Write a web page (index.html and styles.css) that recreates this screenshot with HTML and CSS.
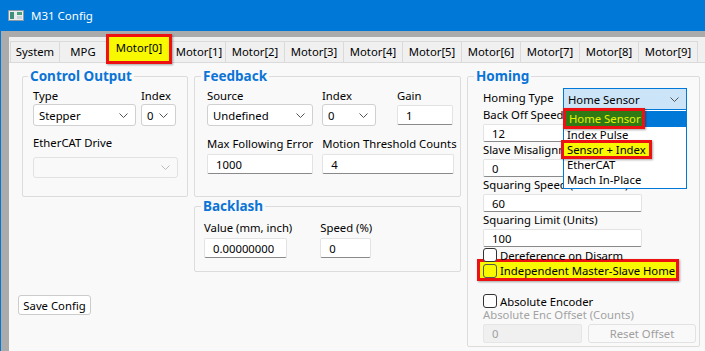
FILE: index.html
```html
<!DOCTYPE html>
<html lang="en">
<head>
  <meta charset="UTF-8" />
  <title>M31 Config</title>
  <link rel="stylesheet" href="styles.css">
</head>
<body>

  <div class="titlebar">
    <svg class="appIcon" width="16" height="11" viewBox="0 0 16 11">
      <rect x="0.5" y="0.5" width="15" height="10" fill="#e8ecef" stroke="#8b9aa6" />
      <rect x="2" y="2" width="4" height="7" fill="#3f8f7a" />
      <rect x="9" y="2" width="5" height="3" fill="#49a07f" />
      <rect x="9" y="6" width="5" height="3" fill="#c9d3da" />
    </svg>
    <span>M31 Config</span>
  </div>

  <div class="frame">
    <div class="tabs">
      <div class="tab tabSystem">System</div>
      <div class="tab tabMpg">MPG</div>
      <div class="tab tabActive">Motor[0]</div>
      <div class="tab tabFirst">Motor[1]</div>
      <div class="tab">Motor[2]</div>
      <div class="tab">Motor[3]</div>
      <div class="tab">Motor[4]</div>
      <div class="tab">Motor[5]</div>
      <div class="tab">Motor[6]</div>
      <div class="tab">Motor[7]</div>
      <div class="tab">Motor[8]</div>
      <div class="tab">Motor[9]</div>
    </div>

    <div class="panel">

      <div class="colLeft">
        <div class="group grpControl">
          <div class="groupTitle">Control Output</div>
          <div class="row rowTop">
            <div class="field">
              <label>Type</label>
              <div class="combo w103"><span>Stepper</span><svg class="chev" width="9" height="5" viewBox="0 0 9 5"><path d="M0.5 0.5 L4.5 4.5 L8.5 0.5" fill="none" stroke="#555" /></svg></div>
            </div>
            <div class="field">
              <label>Index</label>
              <div class="combo w35"><span>0</span><svg class="chev" width="9" height="5" viewBox="0 0 9 5"><path d="M0.5 0.5 L4.5 4.5 L8.5 0.5" fill="none" stroke="#555" /></svg></div>
            </div>
          </div>
          <label class="lblEther">EtherCAT Drive</label>
          <div class="combo comboOff w145"><span></span><svg class="chev" width="9" height="5" viewBox="0 0 9 5"><path d="M0.5 0.5 L4.5 4.5 L8.5 0.5" fill="none" stroke="#bbb" /></svg></div>
        </div>
        <button class="btn btnSave">Save Config</button>
      </div>

      <div class="colMid">
        <div class="group grpFeedback">
          <div class="groupTitle">Feedback</div>
          <div class="row rowTop">
            <div class="field">
              <label>Source</label>
              <div class="combo w106"><span>Undefined</span><svg class="chev" width="9" height="5" viewBox="0 0 9 5"><path d="M0.5 0.5 L4.5 4.5 L8.5 0.5" fill="none" stroke="#555" /></svg></div>
            </div>
            <div class="field">
              <label>Index</label>
              <div class="combo w54"><span>0</span><svg class="chev" width="9" height="5" viewBox="0 0 9 5"><path d="M0.5 0.5 L4.5 4.5 L8.5 0.5" fill="none" stroke="#555" /></svg></div>
            </div>
            <div class="field fieldGain">
              <label>Gain</label>
              <input class="txt w56" type="text" value="1" />
            </div>
          </div>
          <div class="row rowSecond">
            <div class="field">
              <label>Max Following Error</label>
              <input class="txt w106" type="text" value="1000" />
            </div>
            <div class="field">
              <label>Motion Threshold Counts</label>
              <input class="txt w132" type="text" value="4" />
            </div>
          </div>
        </div>

        <div class="group grpBacklash">
          <div class="groupTitle">Backlash</div>
          <div class="row rowBacklash">
            <div class="field">
              <label>Value (mm, inch)</label>
              <input class="txt w83" type="text" value="0.00000000" />
            </div>
            <div class="field">
              <label>Speed (%)</label>
              <input class="txt w51" type="text" value="0" />
            </div>
          </div>
        </div>
      </div>

      <div class="group grpHoming">
        <div class="groupTitle">Homing</div>
        <div class="homingType">
          <label>Homing Type</label>
          <div class="comboWrap">
            <div class="combo comboFocus w124"><span>Home Sensor</span><svg class="chev" width="9" height="5" viewBox="0 0 9 5"><path d="M0.5 0.5 L4.5 4.5 L8.5 0.5" fill="none" stroke="#555" /></svg></div>
            <ul class="dropList">
              <li class="itemSel"><span class="mark markGreen">Home Sensor</span></li>
              <li>Index Pulse</li>
              <li><span class="mark markYellow">Sensor + Index</span></li>
              <li>EtherCAT</li>
              <li>Mach In-Place</li>
            </ul>
          </div>
        </div>
        <label class="hLabel">Back Off Speed (Units/Min)</label>
        <input class="txt hTxt" type="text" value="12" />
        <label class="hLabel">Slave Misalignment (Units)</label>
        <input class="txt hTxt" type="text" value="0" />
        <label class="hLabel">Squaring Speed (Units/Min)</label>
        <input class="txt hTxt" type="text" value="60" />
        <label class="hLabel">Squaring Limit (Units)</label>
        <input class="txt hTxt" type="text" value="100" />
        <div class="check"><span class="box"></span>Dereference on Disarm</div>
        <div class="check checkMarked"><span class="box"></span>Independent Master-Slave Home</div>
        <div class="check checkAbs"><span class="box"></span>Absolute Encoder</div>
        <label class="hLabel lblOff">Absolute Enc Offset (Counts)</label>
        <div class="row rowOffset">
          <input class="txt txtOff w99" type="text" value="0" disabled />
          <button class="btn btnOff" disabled>Reset Offset</button>
        </div>
      </div>

    </div>
  </div>

</body>
</html>
```

FILE: styles.css
```css
body {
  margin: 0;
  width: 704px;
  height: 351px;
  overflow: hidden;
  background-color: #ababab;
  border-left: 1px solid #0078d7;
  font-family: 'Noto Sans', 'Open Sans', sans-serif;
  font-size: 11.3px;
  color: #000;
}

.titlebar {
  height: 31px;
  background-color: #0078d7;
  color: #fff;
  display: flex;
  align-items: center;
  padding-left: 8px;
  gap: 7px;
  margin-left: -1px;
}

.titlebar span {
  font-size: 11.5px;
  margin-top: -1px;
}

.frame {
  margin: 6px 0 0 8px;
  background-color: #f0f0f0;
}

/* tab strip */

.tabs {
  display: flex;
  height: 25px;
  align-items: flex-end;
  padding-left: 1px;
  border-bottom: 1px solid #dadada;
}

.tab {
  height: 21px;
  width: 59px;
  box-sizing: border-box;
  border: 1px solid #dadada;
  border-bottom: none;
  border-left: none;
  text-align: center;
  line-height: 20px;
  background-color: #f0f0f0;
}

.tabSystem {
  width: 50px;
  border-left: 1px solid #dadada;
}

.tabMpg {
  width: 47px;
}

.tabActive {
  width: 66px;
  height: 30px;
  margin: 0 -3px -2px -1px;
  border: 3px solid #ee1111;
  background-color: #f8f800;
  line-height: 21px;
  position: relative;
  box-shadow: 1px 1px 2px rgba(0, 0, 0, 0.35);
}

.tabFirst {
  width: 57px;
  padding-left: 4px;
}

/* main panel */

.panel {
  background-color: #f9f9f9;
  height: 288px;
  padding: 13px 0 0 13px;
  display: grid;
  grid-template-columns: 166px 266px 234px;
  column-gap: 6px;
  align-items: start;
}

.colMid {
  display: flex;
  flex-direction: column;
  gap: 9px;
  margin-right: -1px;
}

.group {
  border: 1px solid #dcdcdc;
  border-radius: 2px;
  box-sizing: border-box;
}

.groupTitle {
  display: table;
  margin-top: -9px;
  padding: 0 2px;
  background-color: #f9f9f9;
  color: #0b74d6;
  font-weight: bold;
  font-size: 13.5px;
  line-height: 16px;
}

.grpControl {
  height: 121px;
  padding-left: 10px;
}

.grpControl .groupTitle {
  margin-left: -5px;
}

.grpFeedback {
  height: 121px;
  padding-left: 12px;
}

.grpFeedback .groupTitle {
  margin-left: -6px;
}

.grpBacklash {
  height: 66px;
  padding-left: 9px;
}

.grpBacklash .groupTitle {
  margin-left: -3px;
}

.grpHoming {
  height: 271px;
  margin-left: 1px;
  padding-left: 15px;
}

.grpHoming .groupTitle {
  margin-left: -9px;
}

.row {
  display: flex;
}

.field {
  display: flex;
  flex-direction: column;
}

label {
  display: block;
  line-height: 15px;
  white-space: nowrap;
}

.rowTop {
  margin-top: 4px;
  gap: 5px;
}

.rowTop .field label {
  margin-bottom: 1px;
}

.grpFeedback .rowTop {
  gap: 9px;
}

.fieldGain {
  margin-left: 12px;
}

.fieldGain .txt {
  margin-top: 1px;
}

.rowSecond {
  margin-top: 10px;
  gap: 9px;
}

.rowSecond label,
.rowBacklash label {
  margin-bottom: 3px;
}

.rowBacklash {
  margin-top: 6px;
  gap: 28px;
}

.lblEther {
  margin: 9px 0 7px;
}

/* combo boxes */

.combo {
  height: 22px;
  box-sizing: border-box;
  background-color: #fff;
  border: 1px solid #d0d0d0;
  border-radius: 3px;
  display: flex;
  align-items: center;
  justify-content: space-between;
  padding: 0 7px 0 5px;
}

.comboOff {
  height: 21px;
  background-color: #f9f9f9;
  border-color: #e2e2e2;
}

.comboFocus {
  background-color: #cce4f7;
  border-color: #0078d7;
  border-radius: 0;
  padding-left: 4px;
}

.chev {
  flex-shrink: 0;
}

.w35 { width: 35px; }
.w51 { width: 51px; }
.w54 { width: 54px; }
.w56 { width: 56px; }
.w83 { width: 83px; }
.w99 { width: 99px; }
.w103 { width: 103px; }
.w106 { width: 106px; }
.w124 { width: 124px; }
.w132 { width: 132px; }
.w145 { width: 145px; }

/* text boxes */

.txt {
  display: block;
  height: 20px;
  box-sizing: border-box;
  border: 1px solid #e3e3e3;
  border-bottom-color: #8a8a8a;
  border-radius: 2px;
  background-color: #fff;
  font-family: inherit;
  font-size: 11.3px;
  padding: 0 0 0 8px;
  color: #000;
}

.hTxt {
  width: 159px;
  height: 18px;
}

.txtOff {
  height: 19px;
  background-color: #f0f0f0;
  border-color: #e6e6e6;
  color: #a0a0a0;
}

/* homing */

.homingType {
  display: flex;
  justify-content: space-between;
  width: 204px;
  height: 19px;
  margin-top: 4px;
}

.homingType label {
  line-height: 19px;
}

.comboWrap {
  position: relative;
  height: 22px;
}

.dropList {
  position: absolute;
  top: 22px;
  left: 0;
  width: 124px;
  box-sizing: border-box;
  margin: 0;
  padding: 1px 0 1px;
  list-style-type: none;
  background-color: #fff;
  border: 1px solid #0078d7;
  border-top: none;
  z-index: 2;
}

.dropList li {
  height: 15px;
  line-height: 15px;
  padding-left: 3px;
  white-space: nowrap;
}

.dropList .itemSel {
  background-color: #0078d7;
  height: 16px;
  line-height: 16px;
}

.mark {
  display: inline-block;
  border: 3px solid #ee1111;
  box-shadow: 1px 1px 2px rgba(0, 0, 0, 0.35);
  padding: 0 3px 0 3px;
  line-height: 15px;
}

.markGreen {
  background-color: #2f7a13;
  color: #eaf200;
  margin: -4px 0 0 -4px;
  width: 70px;
}

.markYellow {
  background-color: #f8f800;
  margin: -2px 0 0 -6px;
  line-height: 13px;
}

.hLabel {
  margin-bottom: 2px;
}

.check {
  display: flex;
  align-items: center;
  gap: 3px;
  height: 16px;
  white-space: nowrap;
}

.box {
  width: 12px;
  height: 12px;
  border: 1px solid #333;
  border-radius: 3px;
  background-color: #fff;
}

.checkMarked {
  width: 193px;
  height: 15px;
  margin: -4px 0 0 -6px;
  padding: 1px 0 0 3px;
  border: 3px solid #ee1111;
  background-color: #f8f800;
  box-shadow: 1px 1px 2px rgba(0, 0, 0, 0.35);
}

.checkMarked .box {
  background-color: #f8f800;
  border-color: #555;
}

.checkAbs {
  margin-top: 12px;
}

.lblOff {
  color: #a3a3a3;
  margin-top: -2px;
}

.rowOffset {
  gap: 6px;
}

/* buttons */

.btn {
  font-family: inherit;
  font-size: 11.3px;
  background-color: #fff;
  border: 1px solid #cccccc;
  border-radius: 3px;
  color: #000;
  padding: 0;
  height: 20px;
}

.btnSave {
  width: 73px;
  margin: 98px 0 0 -4px;
}

.btnOff {
  width: 108px;
  height: 19px;
  background-color: #f9f9f9;
  border-color: #e2e2e2;
  color: #a0a0a0;
}
```
